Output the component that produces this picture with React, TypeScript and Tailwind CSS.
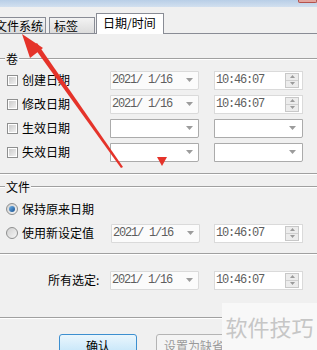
import React from 'react';

function Line() {
  return <div className="h-[2px] flex-1 border-t border-[#a0a0a0] bg-white" />;
}

function GroupHeader({ label }: { label: string }) {
  return (
    <div className="flex h-[14px] items-center">
      <div className="h-[2px] w-[5px] border-t border-[#a0a0a0] bg-white" />
      <span className="px-[1px] leading-none">{label}</span>
      <Line />
    </div>
  );
}

function DropArrow() {
  return (
    <svg width="7" height="4" viewBox="0 0 7 4" className="shrink-0">
      <path d="M0 0h7L3.5 4z" fill="#9c9c9c" />
    </svg>
  );
}

function Spinner() {
  return (
    <div className="flex h-[15px] w-[14px] shrink-0 flex-col border border-[#c8c8c8] bg-[#ececec]">
      <div className="flex flex-1 items-center justify-center border-b border-[#cfcfcf]">
        <svg width="5" height="3" viewBox="0 0 5 3">
          <path d="M0 3h5L2.5 0z" fill="#9a9a9a" />
        </svg>
      </div>
      <div className="flex flex-1 items-center justify-center">
        <svg width="5" height="3" viewBox="0 0 5 3">
          <path d="M0 0h5L2.5 3z" fill="#9a9a9a" />
        </svg>
      </div>
    </div>
  );
}

function DateBox({ value }: { value?: string }) {
  return (
    <div
      className={
        value
          ? 'flex h-[19px] w-[89px] items-center justify-between rounded-br-[2px] border border-[#dadada] bg-[#fbfbfb] pl-[1px] pr-[5px]'
          : 'flex h-[19px] w-[89px] items-center justify-end rounded-br-[2px] border border-[#ababab] bg-white pr-[5px]'
      }
    >
      {value && (
        <span className="whitespace-pre font-['Liberation_Mono',monospace] text-[12px] leading-none tracking-[-1.2px] text-[#5e5e5e]">
          {value}
        </span>
      )}
      <DropArrow />
    </div>
  );
}

function TimeBox({ value }: { value?: string }) {
  return (
    <div
      className={
        value
          ? 'flex h-[19px] w-[89px] items-center justify-between border border-[#dadada] bg-white pl-[1px] pr-[3px]'
          : 'flex h-[19px] w-[89px] items-center justify-end rounded-br-[2px] border border-[#ababab] bg-white pr-[6px]'
      }
    >
      {value && (
        <span className="whitespace-pre font-['Liberation_Mono',monospace] text-[12px] leading-none tracking-[-1.2px] text-[#5e5e5e]">
          {value}
        </span>
      )}
      {value ? <Spinner /> : <DropArrow />}
    </div>
  );
}

function Checkbox() {
  return (
    <div className="h-[11px] w-[11px] shrink-0 border border-[#8e8f8f] bg-white p-[1px]">
      <div className="h-full w-full bg-gradient-to-br from-[#cbcbcb] to-[#f1f1f1]" />
    </div>
  );
}

function Radio({ checked }: { checked?: boolean }) {
  return (
    <div className="flex h-[12px] w-[12px] shrink-0 items-center justify-center rounded-full border border-[#8e8f8f] bg-gradient-to-br from-[#d0d0d0] to-[#f6f6f6]">
      {checked && <div className="h-[6px] w-[6px] rounded-full bg-gradient-to-br from-[#6fb3ea] to-[#17508f]" />}
    </div>
  );
}

const dateRows = [
  { label: '创建日期', date: '2021/ 1/16', time: '10:46:07' },
  { label: '修改日期', date: '2021/ 1/16', time: '10:46:07' },
  { label: '生效日期' },
  { label: '失效日期' },
];

export default function App() {
  return (
    <div className="relative h-[350px] w-[317px] overflow-hidden bg-[#f0f0f0] font-['Noto_Sans_CJK_SC',sans-serif] text-[12px] text-black">
      {/* window frame strip */}
      <div className="flex h-[7px] justify-end bg-gradient-to-b from-[#b8cee7] to-[#d2e0ef]">
        <div className="h-[3px] w-[19px] rounded-b-[2px] border-x border-b border-[#b5524c] bg-[#e3a59f]" />
      </div>

      {/* tabs */}
      <div className="mt-[6px] flex h-[21px] items-end border-b border-[#898c95]">
        <div className="-ml-[8px] flex h-[16px] w-[54px] items-center border-x border-t border-[#898c95] bg-gradient-to-b from-[#f3f3f3] to-[#dcdcdc] pl-[2px] leading-none">
          文件系统
        </div>
        <div className="ml-[3px] flex h-[16px] w-[46px] items-center border-x border-t border-[#898c95] bg-gradient-to-b from-[#f3f3f3] to-[#dcdcdc] pl-[4px] leading-none">
          标签
        </div>
        <div className="relative -mb-px ml-[1px] flex h-[21px] w-[68px] items-center border-x border-t border-[#898c95] bg-white pl-[6px] pb-[2px] leading-none">
          日期/时间
        </div>
      </div>

      {/* 卷 */}
      <div className="mt-[18px]">
        <GroupHeader label="卷" />
      </div>
      <div className="mt-[2px] flex flex-col">
        {dateRows.map((r) => (
          <div key={r.label} className="flex h-[24px] items-center">
            <div className="flex w-[110px] items-center pl-[7px]">
              <Checkbox />
              <span className="ml-[4px] leading-none">{r.label}</span>
            </div>
            <DateBox value={r.date} />
            <div className="ml-[15px]">
              <TimeBox value={r.time} />
            </div>
          </div>
        ))}
      </div>
      <div className="mt-[9px] flex">
        <Line />
      </div>

      {/* 文件 */}
      <div className="mt-[5px]">
        <GroupHeader label="文件" />
      </div>
      <div className="mt-[3px] flex flex-col">
        <div className="flex h-[24px] items-center pl-[6px]">
          <Radio checked />
          <span className="ml-[4px] leading-none">保持原来日期</span>
        </div>
        <div className="flex h-[24px] items-center">
          <div className="flex w-[111px] items-center pl-[6px]">
            <Radio />
            <span className="ml-[4px] leading-none">使用新设定值</span>
          </div>
          <DateBox value="2021/ 1/16" />
          <div className="ml-[14px]">
            <TimeBox value="10:46:07" />
          </div>
        </div>
      </div>
      <div className="mt-[8px] flex">
        <Line />
      </div>

      {/* 所有选定 */}
      <div className="mt-[13px] flex h-[24px] items-center">
        <div className="w-[110px] pl-[48px] leading-none">所有选定:</div>
        <DateBox value="2021/ 1/16" />
        <div className="ml-[15px]">
          <TimeBox value="10:46:07" />
        </div>
      </div>
      <div className="mt-[25px] flex">
        <Line />
      </div>

      {/* buttons */}
      <div className="mt-[15px] flex items-start">
        <button className="ml-[59px] flex h-[23px] w-[78px] items-center justify-center rounded-[3px] border border-[#3c8fd0] bg-gradient-to-b from-[#eaf6fd] to-[#bfe3f8] leading-none text-black">
          确认
        </button>
        <button className="ml-[19px] flex h-[23px] w-[85px] items-center justify-start rounded-[3px] border border-[#b4b4b4] bg-[#f4f4f4] pl-[7px] leading-none text-[#9a9a9a]">
          设置为缺省
        </button>
      </div>

      {/* watermark */}
      <div className="absolute right-0 top-[303px] flex h-[47px] w-[95px] items-center justify-center bg-[#f8f8f8] pb-[2px] text-[22px] leading-none text-[#c6c6c6]">
        软件技巧
      </div>

      {/* red annotation arrow */}
      <svg className="pointer-events-none absolute left-0 top-0" width="317" height="350" viewBox="0 0 317 350">
        <polygon points="33,46 37,43 123,167 121,168" fill="#e5332a" />
        <polygon points="22,34 43,48 30,58" fill="#e5332a" />
        <polygon points="157,157 167,157 162,166" fill="#e5332a" />
      </svg>
    </div>
  );
}
